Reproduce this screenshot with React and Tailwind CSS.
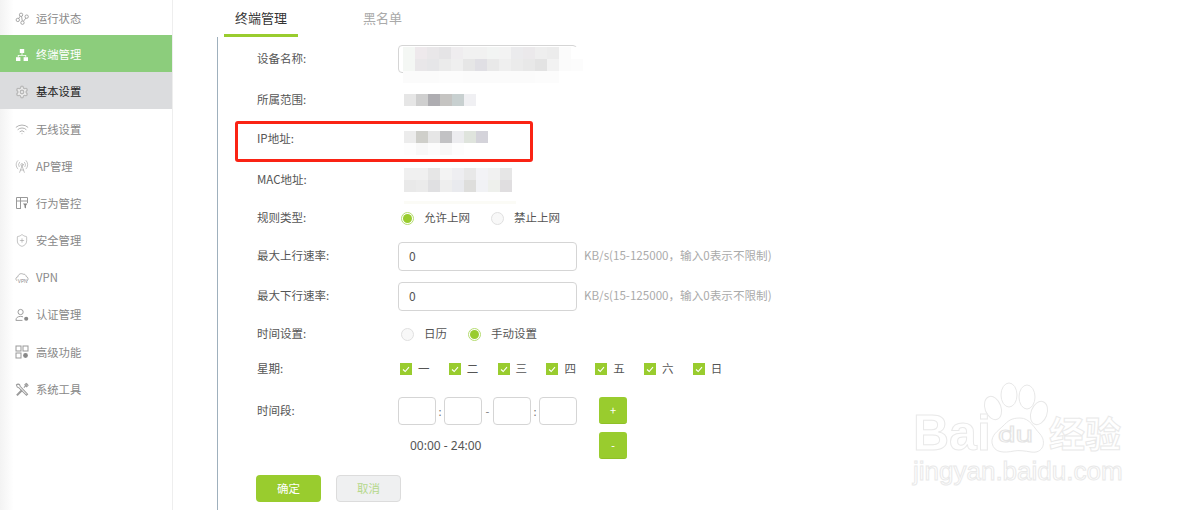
import { Wifi, RadioTower, ShieldPlus, Settings } from 'lucide-react';

const cjk = { fontFamily: '"Noto Sans CJK SC", "Noto Sans", sans-serif' };

function NodesIcon() {
  return (
    <svg width="15" height="15" viewBox="0 0 15 15" fill="none" stroke="#999" strokeWidth="0.9">
      <circle cx="3" cy="9" r="1.8" />
      <circle cx="6.5" cy="3.5" r="1.8" />
      <circle cx="8" cy="12" r="1.8" />
      <circle cx="12.5" cy="5.5" r="1.8" />
      <path d="M4 7.5 5.5 5M7 5.2 7.8 10M9 10.5l2.7-3.5" />
    </svg>
  );
}

function TopologyIcon() {
  return (
    <svg width="14" height="14" viewBox="0 0 14 14" fill="#fff">
      <rect x="4.8" y="1" width="4.4" height="4" />
      <rect x="1" y="9.2" width="4.4" height="3.8" />
      <rect x="8.6" y="9.2" width="4.4" height="3.8" />
      <path d="M6.6 5h.8v2h3.8v2.2h-.8V7.8H3.6v1.4h-.8V7h3.8z" />
    </svg>
  );
}

function BehaviorIcon() {
  return (
    <svg width="14" height="14" viewBox="0 0 14 14" fill="none" stroke="#999" strokeWidth="1">
      <path d="M6 12.5H1.5v-11h11V7M1.5 5h11M5.5 1.5v11" />
      <path d="M8 7.5h4.5l-1.5 2v3l-1.5-1v-2z" fill="#888" stroke="none" />
    </svg>
  );
}

function VpnIcon() {
  return (
    <svg width="15" height="13" viewBox="0 0 15 13" fill="none" stroke="#999" strokeWidth="0.8">
      <path d="M2 10C.4 8.500.8 6 3 5.800 3.500 2.800 6.500 1.500 8.800 3c1.500-.4 3 .8 3.200 2.400 2.200.6 2.500 3.200 1.200 4.600" />
      <text x="3" y="12" fontSize="5" fill="#888" stroke="none" fontFamily="Liberation Sans">VPN</text>
    </svg>
  );
}

function AuthIcon() {
  return (
    <svg width="15" height="14" viewBox="0 0 15 14" fill="none" stroke="#999" strokeWidth="1">
      <circle cx="6" cy="3.800" r="2.800" />
      <path d="M1 12.800c0-3 2-4.300 5-4.300 1 0 2 .2 2.600.5M1 12.800h7" />
      <circle cx="12" cy="11" r="2.200" fill="#888" stroke="none" />
    </svg>
  );
}

function AdvancedIcon() {
  return (
    <svg width="14" height="14" viewBox="0 0 14 14" fill="none" stroke="#999" strokeWidth="1">
      <rect x="1" y="1" width="5" height="5" />
      <rect x="8" y="1" width="5" height="5" />
      <rect x="1" y="8" width="5" height="5" />
      <circle cx="10.500" cy="10.500" r="2.400" fill="#888" stroke="none" />
    </svg>
  );
}

function ToolsIcon() {
  return (
    <svg width="15" height="15" viewBox="0 0 15 15" fill="none" stroke="#999" strokeWidth="1.1">
      <path d="M1.500 2.500c1-1 2.800-1 3.500 0l.5 1.500 8 8.500-1.200 1.200L4 5.500 2.500 5 1.500 2.500z" />
      <path d="M13.500 1.500 9.500 5.500M7 8l-5 5 .8.800 5-5M12 1l2 2-1.500 1.500-2-2z" />
    </svg>
  );
}

const menu = [
  { name: '运行状态', icon: <NodesIcon /> },
  { name: '终端管理', icon: <TopologyIcon />, state: 'active' },
  { name: '基本设置', icon: <Settings size={16} strokeWidth={2.2} color="#b8b8b8" fill="#ededed" />, state: 'open' },
  { name: '无线设置', icon: <Wifi size={14} strokeWidth={1.3} color="#999" /> },
  { name: 'AP管理', icon: <RadioTower size={15} strokeWidth={1} color="#999" /> },
  { name: '行为管控', icon: <BehaviorIcon /> },
  { name: '安全管理', icon: <ShieldPlus size={15} strokeWidth={1} color="#999" /> },
  { name: 'VPN', icon: <VpnIcon /> },
  { name: '认证管理', icon: <AuthIcon /> },
  { name: '高级功能', icon: <AdvancedIcon /> },
  { name: '系统工具', icon: <ToolsIcon /> },
];

const mosaicName = [
  ['#f4f7f4', '#eee9ec', '#e9e7e9', '#e5e4e6', '#efedef', '#f1f1f1', '#f1f1f1', '#f2f4f3', '#f3f3f3', '#ebebed', '#ebe9eb', '#eeeeee', '#ececec', '#fbfbfb', '#ffffff'],
  ['#f4f7f4', '#e9e7e9', '#e6e6e8', '#ebebeb', '#efefef', '#e6e6e6', '#e0dfe4', '#e9e9e9', '#efefef', '#ebebeb', '#e8e8e8', '#e3e3e3', '#f2f2f2', '#fbfbfb', '#fcfcfc'],
  ['#fbfbfb', '#fbfbfb', '#fbfbfb', '#fcfcfc', '#fcfcfc', '#fbfbfb', '#fbfbfb', '#fbfbfb', '#fbfbfb', '#fbfbfb', '#fbfbfb', '#fcfcfc', '#fcfcfc', '#ffffff', '#ffffff'],
];
const mosaicScope = [['#e6e6e6', '#cfcfcf', '#aeadb1', '#c5c4c2', '#c8d0d0', '#f0f0f3']];
const mosaicIp = [
  ['#ececec', '#cfcfca', '#e6e6e6', '#c2c2c4', '#ececef', '#dfe4dd', '#d4d3da'],
  ['#fdfdfd', '#f8f8f8', '#fcfcfc', '#f8f8f8', '#fdfdfd', '#ffffff', '#ffffff'],
];
const mosaicMac = [
  ['#f0f0f0', '#f0f0f0', '#e6e6e6', '#f3f3f3', '#eeeef1', '#e8e8e8', '#f3f3f6', '#f1f1f1', '#e6e6e6'],
  ['#e9e9e9', '#ebebeb', '#e0e0e2', '#eeeeee', '#e9eaee', '#dededc', '#f1f2f5', '#eef0ec', '#e0dee0'],
];

const days = ['一', '二', '三', '四', '五', '六', '日'];

function Mosaic({ rows }) {
  return (
    <div className="flex flex-col">
      {rows.map((row, i) => (
        <div key={i} className="flex">
          {row.map((c, j) => (
            <div key={j} className="w-[12px] h-[12px]" style={{ backgroundColor: c }} />
          ))}
        </div>
      ))}
    </div>
  );
}

function Row({ label, className, children }) {
  return (
    <div className={`flex items-center ${className}`}>
      <div className="w-[141px] shrink-0 text-[11.5px] text-[#555]">{label}</div>
      {children}
    </div>
  );
}

function Radio({ checked, label, className }) {
  return (
    <div className={`flex items-center ${className}`}>
      {checked ? (
        <span className="w-[13px] h-[13px] rounded-full border border-[#b5dc70] flex items-center justify-center">
          <span className="w-[9px] h-[9px] rounded-full bg-[#99cc2e]" />
        </span>
      ) : (
        <span className="w-[13px] h-[13px] rounded-full border border-[#e0e0e0] bg-[#f8f8f8]" />
      )}
      <span className="ml-[10px] text-[11.5px] text-[#555]">{label}</span>
    </div>
  );
}

function TextBox({ value }) {
  return (
    <div className="w-[179px] h-[29px] border border-[#d5d5d5] rounded-[4px] pl-[10px] flex items-center text-[12px] text-[#555]">
      {value}
    </div>
  );
}

function TimeBox() {
  return <div className="w-[38px] h-[28px] border border-[#d5d5d5] rounded-[4px]" />;
}

function SmallButton({ children }) {
  return (
    <div className="w-[28px] h-[27px] rounded-[3px] bg-[#99cc2e] border-b border-[#8fc027] text-white text-[11px] flex items-center justify-center">
      {children}
    </div>
  );
}

function Watermark() {
  const outline = 'text-white [-webkit-text-stroke:1px_#e9e9e9] leading-none absolute';
  return (
    <div className="absolute left-[905px] top-[380px] w-[240px] h-[115px]" style={{ fontFamily: '"Liberation Sans", sans-serif' }}>
      <svg className="absolute left-0 top-0" width="240" height="90" fill="#fff" stroke="#e8e8e8" strokeWidth="1">
        <ellipse cx="88" cy="28" rx="8" ry="12" transform="rotate(-20 88 28)" />
        <ellipse cx="104" cy="15" rx="8" ry="12" />
        <ellipse cx="122" cy="17" rx="8" ry="12" />
        <ellipse cx="134" cy="33" rx="8" ry="12" transform="rotate(20 134 33)" />
        <path d="M115 38c10 0 14 10 20 16 7 8 3 20-9 18-6-1-12-2-17-1-10 2-20 2-22-8-1-8 6-12 11-17 5-5 8-8 17-8z" />
        <text x="93" y="62" fontSize="22" textLength="35" lengthAdjust="spacingAndGlyphs" fill="#fff" stroke="#e4e4e4" fontFamily="Liberation Sans">du</text>
      </svg>
      <span className={`${outline} left-[8px] top-[28px] text-[50px] font-bold`}>Bai</span>
      <span className={`${outline} left-[144px] top-[34px] text-[36px] font-bold`} style={cjk}>经验</span>
      <span className={`${outline} left-[8px] top-[78px] text-[26px]`}>jingyan.baidu.com</span>
    </div>
  );
}

export default function App() {
  return (
    <div className="relative flex w-[1190px] h-[510px] overflow-hidden bg-white" style={cjk}>
      <aside className="w-[173px] shrink-0 h-full border-r border-[#eeeeee] bg-gradient-to-r from-[#f3f3f3] to-white to-[8%]">
        {menu.map((item, i) => (
          <div
            key={item.name}
            className={`flex items-center pl-[15px] pt-[2px] gap-[7px] text-[11.3px] ${i === 0 ? 'h-[35px]' : 'h-[37.2px]'} ${
              item.state === 'active'
                ? 'bg-[#8ccd7c] text-white'
                : item.state === 'open'
                ? 'bg-[#dbdcde] text-[#222]'
                : 'text-[#888]'
            }`}
          >
            <span className="w-[14px] flex justify-center shrink-0">{item.icon}</span>
            {item.name}
          </div>
        ))}
      </aside>

      <main className="flex-1 min-w-0">
        <div className="h-[37px] flex pl-[51px]">
          <div className="w-[74px] h-[37px] border-b-[3px] border-[#99cc2e] flex justify-center pt-[8px] text-[13px] text-[#333]">
            终端管理
          </div>
          <div className="ml-[65px] pt-[8px] text-[13px] text-[#aaa]">黑名单</div>
        </div>

        <div className="ml-[44px] h-[473px] border-l border-[#9fb0bd] pl-[39px]">
          <Row label="设备名称:" className="h-[44px]">
            <div className="w-[179px] h-[28px] border border-[#d5d5d5] rounded-[4px]" />
          </Row>
          <Row label="所属范围:" className="h-[38px]">
            <div className="ml-[6px]"><Mosaic rows={mosaicScope} /></div>
          </Row>
          <Row label="IP地址:" className="h-[40px]">
            <div className="ml-[6px] mt-[8px]"><Mosaic rows={mosaicIp} /></div>
          </Row>
          <Row label="MAC地址:" className="h-[42px]">
            <div className="ml-[6px]"><Mosaic rows={mosaicMac} /></div>
          </Row>
          <Row label="规则类型:" className="h-[34px]">
            <Radio checked label="允许上网" className="ml-[3px]" />
            <Radio label="禁止上网" className="ml-[21px]" />
          </Row>
          <Row label="最大上行速率:" className="h-[42px]">
            <TextBox value="0" />
            <span className="ml-[7px] text-[11.6px] text-[#aaa]">KB/s(15-125000，输入0表示不限制)</span>
          </Row>
          <Row label="最大下行速率:" className="h-[38px]">
            <TextBox value="0" />
            <span className="ml-[7px] text-[11.6px] text-[#aaa]">KB/s(15-125000，输入0表示不限制)</span>
          </Row>
          <Row label="时间设置:" className="h-[38px]">
            <Radio label="日历" className="ml-[3px]" />
            <Radio checked label="手动设置" className="ml-[21px]" />
          </Row>
          <Row label="星期:" className="h-[32px]">
            <div className="flex ml-[2px]">
              {days.map((d) => (
                <div key={d} className="w-[48.8px] flex items-center gap-[6px] text-[11.5px] text-[#555]">
                  <span className="w-[12px] h-[12px] bg-[#99cc2e] flex items-center justify-center">
                    <svg width="8" height="7" viewBox="0 0 8 7" fill="none" stroke="#fff" strokeWidth="1.1">
                      <path d="M1 3.500 3.200 5.500 7 1.200" />
                    </svg>
                  </span>
                  {d}
                </div>
              ))}
            </div>
          </Row>
          <div className="h-[47px] flex items-start pt-[12px]">
            <div className="w-[141px] h-[28px] flex items-center text-[11.5px] text-[#555]">时间段:</div>
            <div className="flex items-center text-[11px] text-[#777]">
              <TimeBox />
              <span className="w-[8px] text-center">:</span>
              <TimeBox />
              <span className="w-[11px] text-center">-</span>
              <TimeBox />
              <span className="w-[8px] text-center">:</span>
              <TimeBox />
            </div>
            <div className="ml-[22px]"><SmallButton>+</SmallButton></div>
          </div>
          <div className="h-[27px] flex items-center pl-[153px] text-[12px] text-[#555]" style={{ fontFamily: '"Noto Sans", sans-serif' }}>
            <span className="w-[189px]">00:00 - 24:00</span>
            <SmallButton>-</SmallButton>
          </div>
          <div className="flex mt-[16px] gap-[15px] -ml-[1px]">
            <div className="w-[65px] h-[27px] rounded-[4px] bg-[#99cc2e] text-white text-[11.5px] flex items-center justify-center">
              确定
            </div>
            <div className="w-[65px] h-[27px] rounded-[4px] bg-[#eff0f1] border border-[#dcdcdc] text-[#b5d88a] text-[11.5px] flex items-center justify-center">
              取消
            </div>
          </div>
        </div>
      </main>

      {/* mosaic over the device name box, spills past its border */}
      <div className="absolute left-[403px] top-[47px]"><Mosaic rows={mosaicName} /></div>
      <div className="absolute left-[404px] top-[201px] w-[112px] h-[3px] bg-[#fbfbf6]" />
      <div className="absolute left-[235px] top-[121px] w-[298px] h-[41px] border-[3px] border-[#fa2314] rounded-[3px]" />
      <Watermark />
    </div>
  );
}
